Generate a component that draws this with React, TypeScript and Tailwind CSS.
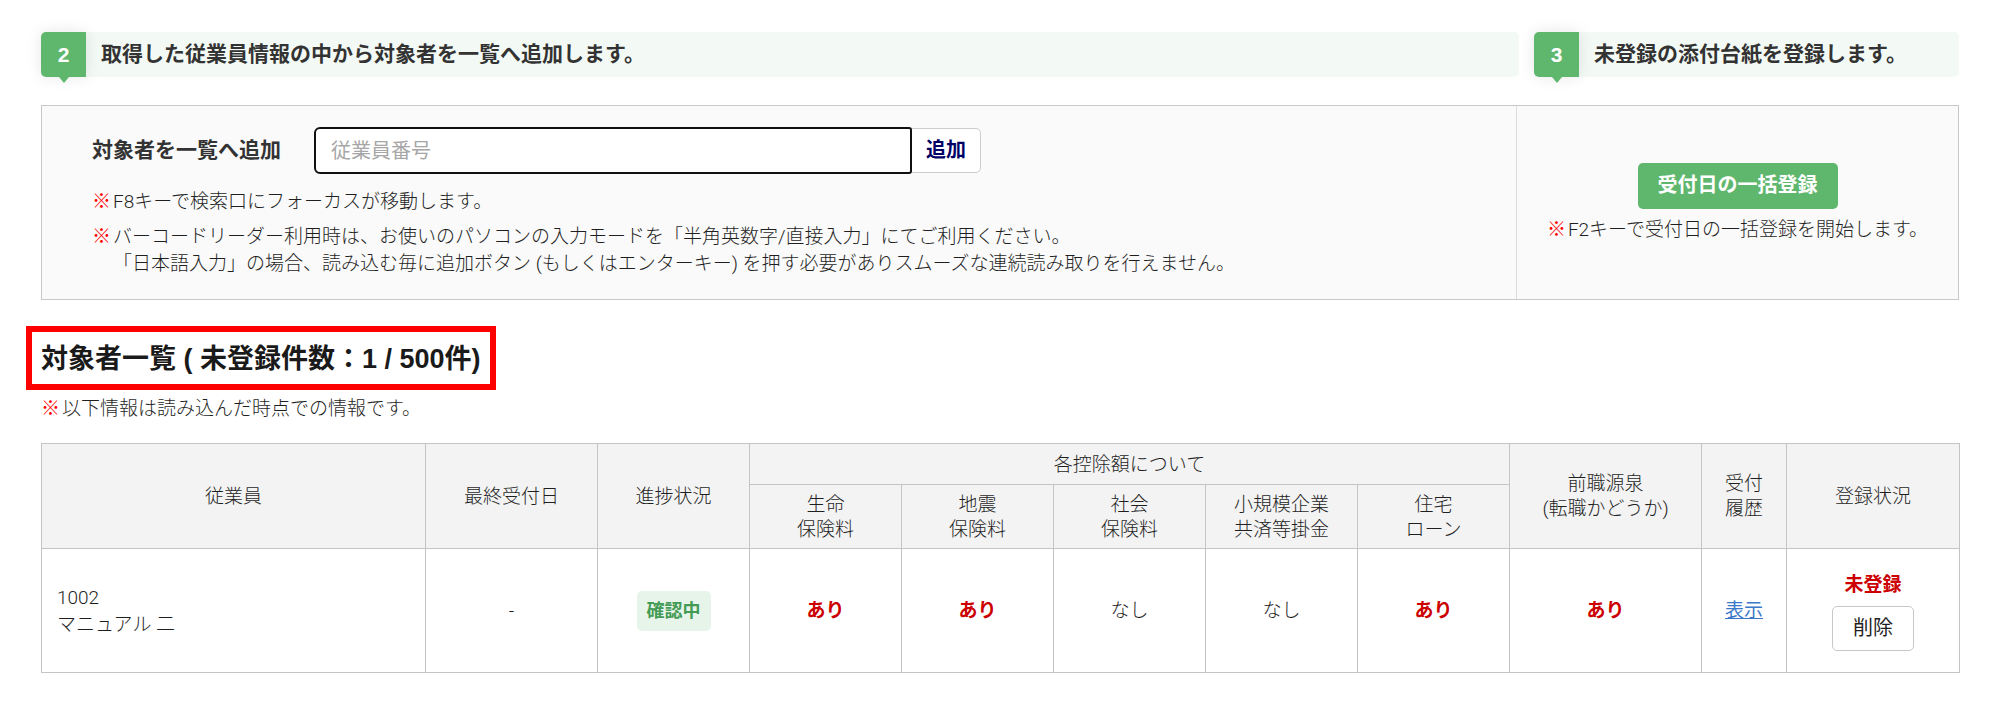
import React from "react";

const deductions = [
  { head: ["生命", "保険料"], value: true },
  { head: ["地震", "保険料"], value: true },
  { head: ["社会", "保険料"], value: false },
  { head: ["小規模企業", "共済等掛金"], value: false },
  { head: ["住宅", "ローン"], value: true },
];

const App = () => {
  return (
    <main className="px-[41px] pt-8 pb-11 bg-white text-[#1f1f1f] text-[19px] leading-[27px] font-light font-['Roboto','Noto_Sans_CJK_JP',sans-serif]">
      {/* Step headings */}
      <div className="grid grid-cols-[1fr_425px] gap-[15px]">
        <Step number={2} text="取得した従業員情報の中から対象者を一覧へ追加します。" />
        <Step number={3} text="未登録の添付台紙を登録します。" />
      </div>

      {/* Add / bulk registration panel */}
      <section className="mt-7 grid grid-cols-[1fr_442px] border border-[#c8c8c8] bg-[#fafafa]">
        <div className="pl-[50px] pr-4 pt-[22px] pb-[22px]">
          <form className="flex items-center" onSubmit={(e) => e.preventDefault()}>
            <label htmlFor="employee-no" className="w-[223px] text-[21px] font-bold text-[#333]">
              対象者を一覧へ追加
            </label>
            <input
              id="employee-no"
              type="text"
              placeholder="従業員番号"
              className="relative z-10 h-[45px] w-[596px] rounded-l-[5px] rounded-r-[2px] bg-white px-4 text-[20px] font-normal outline-2 -outline-offset-1 outline-[#101010] placeholder:text-[#a6a6a6]"
            />
            <button
              type="submit"
              className="h-[45px] w-[70px] rounded-r-[5px] border border-[#ccc] bg-white text-[20px] font-bold text-[#000066]"
            >
              追加
            </button>
          </form>
          <Note className="mt-[15px]">F8キーで検索口にフォーカスが移動します。</Note>
          <Note className="mt-2">
            バーコードリーダー利用時は、お使いのパソコンの入力モードを「半角英数字/直接入力」にてご利用ください。
            <br />
            「日本語入力」の場合、読み込む毎に追加ボタン (もしくはエンターキー) を押す必要がありスムーズな連続読み取りを行えません。
          </Note>
        </div>
        <div className="flex flex-col items-center justify-center border-l border-[#ddd]">
          <button
            type="button"
            className="h-[46px] rounded-[5px] bg-[#5fb76e] px-5 text-[20px] font-bold text-white"
          >
            受付日の一括登録
          </button>
          <Note className="mt-[7px]">F2キーで受付日の一括登録を開始します。</Note>
        </div>
      </section>

      {/* List heading with highlight frame */}
      <div className="mt-[26px] -ml-[15px] w-fit border-6 border-[#ff0000] px-[9px] pt-[9px] pb-[7px]">
        <h2 className="text-[27px] leading-9 font-bold text-[#1a1a1a] font-['Liberation_Sans','Noto_Sans_CJK_JP',sans-serif]">
          対象者一覧 ( 未登録件数：1 / 500件)
        </h2>
      </div>
      <Note className="mt-[5px]">以下情報は読み込んだ時点での情報です。</Note>

      <table className="mt-[21px] w-full table-fixed border-collapse text-center">
        <colgroup>
          <col className="w-[384px]" />
          <col className="w-[172px]" />
          <col className="w-[152px]" />
          {deductions.map((d) => (
            <col key={d.head[0]} className="w-[152px]" />
          ))}
          <col className="w-[192px]" />
          <col className="w-[85px]" />
          <col className="w-[173px]" />
        </colgroup>
        <thead className="bg-[#f3f3f3] leading-[25px]">
          <tr className="h-[41px]">
            <Th rowSpan={2}>従業員</Th>
            <Th rowSpan={2}>最終受付日</Th>
            <Th rowSpan={2}>進捗状況</Th>
            <Th colSpan={5}>各控除額について</Th>
            <Th rowSpan={2}>
              前職源泉
              <br />
              (転職かどうか)
            </Th>
            <Th rowSpan={2}>
              受付
              <br />
              履歴
            </Th>
            <Th rowSpan={2}>登録状況</Th>
          </tr>
          <tr className="h-16">
            {deductions.map((d) => (
              <Th key={d.head[0]}>
                {d.head[0]}
                <br />
                {d.head[1]}
              </Th>
            ))}
          </tr>
        </thead>
        <tbody>
          <tr className="h-[124px]">
            <Td className="px-[15px] text-left">
              1002
              <br />
              マニュアル 二
            </Td>
            <Td>-</Td>
            <Td>
              <span className="inline-block rounded-[5px] bg-[#e6f4e9] px-[10px] text-[18px] leading-10 font-bold text-[#449b55]">
                確認中
              </span>
            </Td>
            {deductions.map((d) => (
              <Td key={d.head[0]}>
                <Flag value={d.value} />
              </Td>
            ))}
            <Td>
              <Flag value={true} />
            </Td>
            <Td>
              <a href="#history" className="font-normal text-[#3b78c9] underline">
                表示
              </a>
            </Td>
            <Td>
              <p className="font-bold text-[#cc0000]">未登録</p>
              <button
                type="button"
                className="mt-2 h-[45px] w-[82px] rounded-[5px] border border-[#c8c8c8] bg-white text-[20px] font-normal"
              >
                削除
              </button>
            </Td>
          </tr>
        </tbody>
      </table>
    </main>
  );
};

const Step = ({ number, text }: { number: number; text: string }) => (
  <div className="flex h-[45px] items-center rounded-[5px] bg-[#f3faf5]">
    <div className="relative h-[45px] w-[45px] rounded-l-[5px] bg-[#5fb76e] text-center text-[21px] leading-[45px] font-bold text-white shadow-[0_0_15px_rgba(0,0,0,0.1)] font-['Liberation_Sans',sans-serif]">
      {number}
      <svg className="absolute top-full left-5 -ml-0.5" width="10" height="6" viewBox="0 0 10 6" aria-hidden="true">
        <path d="M0 0h10L5 6z" fill="#5fb76e" />
      </svg>
    </div>
    <h2 className="pl-[15px] text-[21px] font-bold text-[#333]">{text}</h2>
  </div>
);

const Note = ({
  children,
  className,
}: {
  children: React.ReactNode;
  className: string;
}) => (
  <p className={`flex ${className}`}>
    <span className="w-[21px] shrink-0 font-black text-[#ff0000]">※</span>
    <span>{children}</span>
  </p>
);

const Th = ({
  children,
  rowSpan,
  colSpan,
}: {
  children: React.ReactNode;
  rowSpan?: number;
  colSpan?: number;
}) => (
  <th rowSpan={rowSpan} colSpan={colSpan} className="border border-[#c4c4c4] font-light">
    {children}
  </th>
);

const Td = ({
  children,
  className = "",
}: {
  children: React.ReactNode;
  className?: string;
}) => <td className={`border border-[#c4c4c4] ${className}`}>{children}</td>;

const Flag = ({ value }: { value: boolean }) =>
  value ? <span className="font-bold text-[#cc0000]">あり</span> : <span>なし</span>;

export default App;
